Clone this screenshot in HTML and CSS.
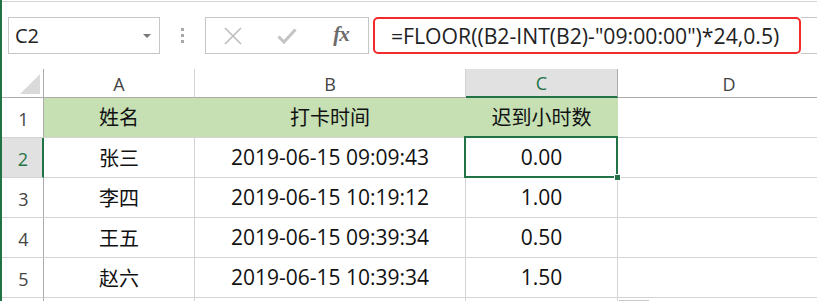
FILE: index.html
```html
<!DOCTYPE html>
<html lang="zh">
<head>
<meta charset="utf-8">
<link rel="stylesheet" href="styles.css">
</head>
<body>
<div class="app">
  <div class="topline"></div>
  <div class="toolbar">
    <div class="namebox"><span class="ref">C2</span><span class="caret"></span></div>
    <div class="grip"><i></i><i></i><i></i></div>
    <div class="btns">
      <span class="btn">
        <svg width="20" height="20" viewBox="0 0 20 20"><path d="M2 2 L18 18 M18 2 L2 18" stroke="#bdbdbd" stroke-width="1.6" fill="none"/></svg>
      </span>
      <span class="btn">
        <svg width="20" height="20" viewBox="0 0 20 20"><path d="M1.5 10.5 L7 16 L18.5 3.5" stroke="#c4c4c4" stroke-width="3" fill="none"/></svg>
      </span>
      <span class="btn fx">fx</span>
    </div>
    <div class="formula">
      <div class="fbox">=FLOOR((B2-INT(B2)-"09:00:00")*24,0.5)</div>
      <div class="frest"></div>
    </div>
  </div>
  <div class="sheet">
    <div class="corner"><span class="tri"></span></div>
    <div class="colh">A</div>
    <div class="colh">B</div>
    <div class="colh sel">C</div>
    <div class="colh last">D</div>

    <div class="rowh">1</div>
    <div class="cell head zh">姓名</div>
    <div class="cell head zh">打卡时间</div>
    <div class="cell head zh">迟到小时数</div>
    <div class="cell"></div>

    <div class="rowh sel">2</div>
    <div class="cell zh">张三</div>
    <div class="cell">2019-06-15 09:09:43</div>
    <div class="cell active">0.00<span class="handle"></span></div>
    <div class="cell"></div>

    <div class="rowh">3</div>
    <div class="cell zh">李四</div>
    <div class="cell">2019-06-15 10:19:12</div>
    <div class="cell">1.00</div>
    <div class="cell"></div>

    <div class="rowh">4</div>
    <div class="cell zh">王五</div>
    <div class="cell">2019-06-15 09:39:34</div>
    <div class="cell">0.50</div>
    <div class="cell"></div>

    <div class="rowh">5</div>
    <div class="cell zh">赵六</div>
    <div class="cell">2019-06-15 10:39:34</div>
    <div class="cell">1.50</div>
    <div class="cell"></div>

    <div class="rowh stub"></div>
    <div class="cell stub"></div>
    <div class="cell stub"></div>
    <div class="cell stub"></div>
    <div class="cell stub"><span class="scroll"></span></div>
  </div>
</div>
</body>
</html>
```

FILE: styles.css
```css
* { box-sizing: border-box; }
html, body { margin: 0; padding: 0; background: #fff; }
body {
  font-family: "Open Sans", "Noto Sans CJK SC", sans-serif;
  overflow: hidden;
  width: 817px;
  height: 301px;
}
.app {
  border-left: 2px solid #217346;
  height: 301px;
  padding-top: 1px;
  overflow: hidden;
}
.topline { height: 1px; background: #d4d4d4; }
.toolbar {
  display: flex;
  align-items: stretch;
  padding: 15px 0 15px 6px;
  height: 67px;
  background: #fff;
}
.namebox {
  width: 152px;
  height: 37px;
  border: 1px solid #c6c6c6;
  display: flex;
  align-items: center;
  justify-content: space-between;
  padding: 0 8px 0 6px;
  font-size: 20px;
  color: #222;
}
.ref { line-height: 1; }
.caret {
  width: 0; height: 0;
  border-left: 4px solid transparent;
  border-right: 4px solid transparent;
  border-top: 4px solid #777;
  margin-top: 1px;
}
.grip {
  width: 45px;
  display: flex;
  flex-direction: column;
  align-items: center;
  justify-content: center;
  gap: 3px;
  padding-bottom: 1px;
}
.grip i { display: block; width: 3px; height: 3px; background: #a9a9a9; }
.btns {
  width: 164px;
  height: 37px;
  border: 1px solid #c6c6c6;
  display: flex;
  align-items: center;
}
.btn {
  width: 54px;
  height: 35px;
  display: flex;
  align-items: center;
  justify-content: center;
}
.btn svg { display: block; }
.fx {
  font-family: "Liberation Serif", "DejaVu Serif", serif;
  font-style: italic;
  font-weight: bold;
  font-size: 21px;
  color: #6b6b6b;
  letter-spacing: -1px;
  padding-bottom: 2px;
}
.formula {
  margin-left: 4px;
  display: flex;
  flex: 1;
  height: 37px;
}
.fbox {
  width: 428px;
  height: 37px;
  border: 2px solid #f22a2a;
  border-radius: 5px;
  display: flex;
  align-items: center;
  padding-left: 16px;
  padding-bottom: 1px;
  font-size: 21.2px;
  color: #222;
  white-space: nowrap;
  flex-shrink: 0;
}
.frest {
  flex: 1;
  border-top: 1px solid #c6c6c6;
  border-bottom: 1px solid #c6c6c6;
}
.sheet {
  display: grid;
  grid-template-columns: 42px 151px 271px 152px 222px;
  grid-template-rows: 29px 40px 40px 40px 40px 40px 4px;
}
.corner {
  border-right: 1px solid #ababab;
  border-bottom: 1px solid #ababab;
  position: relative;
}
.tri {
  position: absolute;
  right: 3px;
  bottom: 3px;
  width: 0; height: 0;
  border-left: 20px solid transparent;
  border-bottom: 20px solid #dadada;
}
.colh {
  border-right: 1px solid #d4d4d4;
  border-bottom: 1px solid #ababab;
  display: flex;
  align-items: center;
  justify-content: center;
  font-size: 18px;
  color: #444;
  padding-top: 1px;
}
.colh.last { border-right: none; }
.colh.sel {
  background: #e1e1e1;
  color: #217346;
  border-bottom: 2px solid #217346;
  border-right-color: #ababab;
}
.rowh {
  border-right: 1px solid #ababab;
  border-bottom: 1px solid #d4d4d4;
  display: flex;
  align-items: flex-end;
  justify-content: center;
  font-size: 18px;
  color: #444;
  padding-bottom: 6px;
  padding-left: 2px;
}
.rowh.sel {
  background: #e1e1e1;
  color: #217346;
  border-right: 2px solid #217346;
}
.cell {
  border-right: 1px solid #d4d4d4;
  border-bottom: 1px solid #d4d4d4;
  display: flex;
  align-items: center;
  justify-content: center;
  font-size: 21px;
  color: #111;
  white-space: nowrap;
  padding-bottom: 1px;
}
.cell.zh { font-size: 20px; }
.cell.head {
  background: #c6e0b4;
  border-right-color: #c6e0b4;
  padding-bottom: 3px;
}
.stub { border-bottom: none; padding: 0; position: relative; }
.scroll {
  position: absolute;
  left: 1px;
  bottom: 0;
  width: 30px;
  height: 2px;
  background: #c8c8c8;
}
.cell.active { position: relative; }
.cell.active::after {
  content: "";
  position: absolute;
  left: -2px;
  top: -2px;
  right: -1px;
  bottom: -1px;
  border: 2px solid #217346;
  pointer-events: none;
}
.handle {
  position: absolute;
  right: -4px;
  bottom: -4px;
  width: 7px;
  height: 7px;
  background: #217346;
  border: 1px solid #fff;
  z-index: 2;
}
```
